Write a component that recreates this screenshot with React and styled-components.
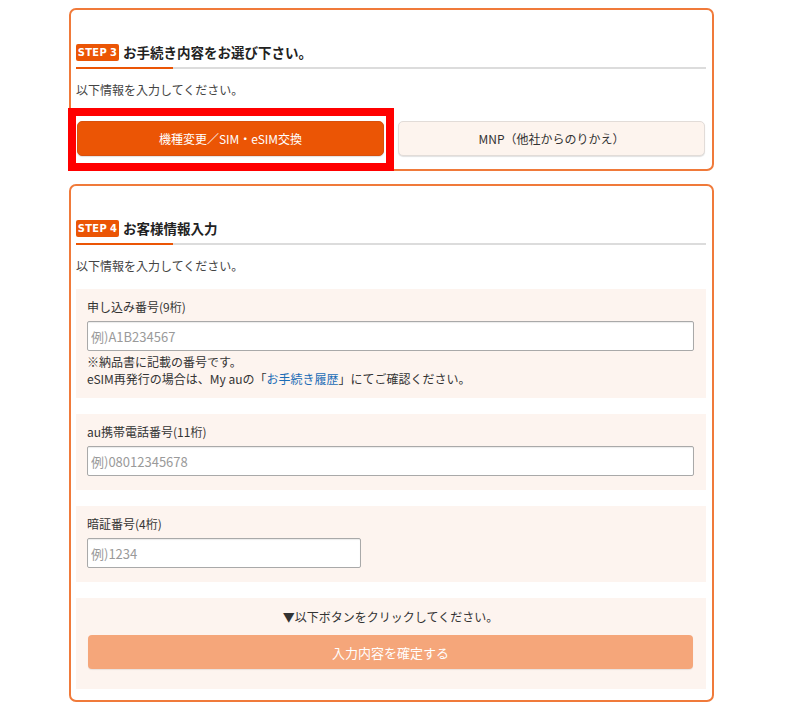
import React from "react";
import styled, { createGlobalStyle } from "styled-components";

const GlobalStyle = createGlobalStyle`
  html, body { margin: 0; padding: 0; background: #fff; }
  body {
    font-family: "Noto Sans CJK JP", "Noto Sans", sans-serif;
    color: #333;
    -webkit-font-smoothing: antialiased;
  }
  * { box-sizing: border-box; }
`;

const Page = styled.div`
  padding: 8px 0 20px 69px;
  width: 714px;
  display: flex;
  flex-direction: column;
  gap: 13px;
`;

const Card = styled.section`
  border: 2px solid #f07a3a;
  border-radius: 7px;
  padding: 33px 6px ${(p) => p.$bottom}px 5px;
  background: #fff;
`;

const Heading = styled.div`
  position: relative;
  display: flex;
  align-items: center;
  gap: 4px;
  padding-bottom: 6px;
  border-bottom: 2px solid #dcdcdc;
  &::after {
    content: "";
    position: absolute;
    left: 0;
    bottom: -2px;
    width: 97px;
    height: 2px;
    background: #eb5505;
  }
`;

const Badge = styled.span`
  display: inline-flex;
  align-items: center;
  justify-content: center;
  width: 43px;
  height: 17px;
  background: #eb5505;
  color: #fff;
  border-radius: 2px;
  font-family: "Liberation Sans Narrow", "DejaVu Sans Condensed", "Roboto", sans-serif;
  font-weight: 700;
  font-size: 11px;
  letter-spacing: 0.3px;
  line-height: 1;
  gap: 3px;
`;

const Title = styled.h2`
  margin: 0;
  font-size: 13.5px;
  font-weight: 700;
  color: #222;
  line-height: 18px;
`;

const Lead = styled.p`
  margin: ${(p) => p.$top}px 0 ${(p) => p.$bottom}px;
  font-size: 12px;
  line-height: 18px;
  color: #444;
`;

const ChoiceRow = styled.div`
  display: grid;
  grid-template-columns: 1fr 1fr;
  gap: 14px;
  padding: 0 1px 0 1px;
`;

const ChoiceWrap = styled.div`
  position: relative;
`;

const Highlight = styled.span`
  position: absolute;
  top: -13px;
  left: -9px;
  right: -10px;
  bottom: -15px;
  border: 8px solid #ff0000;
  pointer-events: none;
`;

const Choice = styled.button`
  width: 100%;
  height: 35px;
  border-radius: 5px;
  font-family: inherit;
  font-size: 12px;
  cursor: pointer;
  border: 1px solid ${(p) => (p.$active ? "#d9500c" : "#e2dcd8")};
  background: ${(p) => (p.$active ? "#eb5505" : "#fdf4ee")};
  color: ${(p) => (p.$active ? "#fff" : "#333")};
  box-shadow: 0 1px 1px rgba(0, 0, 0, 0.12);
`;

const Fields = styled.div`
  display: flex;
  flex-direction: column;
  gap: 16px;
`;

const Field = styled.div`
  background: #fdf4ef;
  padding: 9px 12px ${(p) => p.$bottom ?? 14}px 11px;
`;

const Label = styled.label`
  display: block;
  font-size: 12px;
  line-height: 18px;
  color: #333;
  margin-bottom: 5px;
`;

const Input = styled.input`
  display: block;
  width: ${(p) => p.$width || "100%"};
  height: 30px;
  border: 1px solid #a9a9a9;
  border-radius: 2px;
  background: #fff;
  padding: 0 3px;
  font-family: inherit;
  font-size: 13px;
  color: #333;
  box-shadow: inset 0 1px 1px rgba(0, 0, 0, 0.08);
  &::placeholder { color: #9a9a9a; }
`;

const Note = styled.p`
  margin: 2px 0 0;
  font-size: 12px;
  line-height: 17px;
  color: #333;
`;

const Link = styled.a`
  color: #1a6cb6;
  text-decoration: none;
`;

const SubmitArea = styled.div`
  background: #fdf4ef;
  padding: 9px 13px 20px 12px;
  display: flex;
  flex-direction: column;
  align-items: center;
`;

const SubmitHint = styled.p`
  margin: 0 0 8px;
  font-size: 12px;
  line-height: 20px;
  color: #333;
`;

const Submit = styled.button`
  width: 100%;
  height: 34px;
  border: none;
  border-radius: 4px;
  background: #f5a67a;
  color: #fff;
  font-family: inherit;
  font-size: 13px;
  box-shadow: 0 1px 1px rgba(0, 0, 0, 0.08);
`;

export default function App() {
  return (
    <>
      <GlobalStyle />
      <Page>
        <Card $bottom={13}>
          <Heading>
            <Badge>
              <span>STEP</span>
              <span>3</span>
            </Badge>
            <Title>お手続き内容をお選び下さい。</Title>
          </Heading>
          <Lead $top={12} $bottom={22}>以下情報を入力してください。</Lead>
          <ChoiceRow>
            <ChoiceWrap>
              <Choice $active>機種変更／SIM・eSIM交換</Choice>
              <Highlight />
            </ChoiceWrap>
            <ChoiceWrap>
              <Choice>MNP（他社からのりかえ）</Choice>
            </ChoiceWrap>
          </ChoiceRow>
        </Card>

        <Card $bottom={11}>
          <Heading>
            <Badge>
              <span>STEP</span>
              <span>4</span>
            </Badge>
            <Title>お客様情報入力</Title>
          </Heading>
          <Lead $top={12} $bottom={14}>以下情報を入力してください。</Lead>
          <Fields>
            <Field $bottom={11}>
              <Label>申し込み番号(9桁)</Label>
              <Input placeholder="例)A1B234567" />
              <Note>
                ※納品書に記載の番号です。
                <br />
                eSIM再発行の場合は、My auの「<Link href="#">お手続き履歴</Link>」にてご確認ください。
              </Note>
            </Field>
            <Field>
              <Label>au携帯電話番号(11桁)</Label>
              <Input placeholder="例)08012345678" />
            </Field>
            <Field>
              <Label>暗証番号(4桁)</Label>
              <Input $width="274px" placeholder="例)1234" />
            </Field>
            <SubmitArea>
              <SubmitHint>▼以下ボタンをクリックしてください。</SubmitHint>
              <Submit>入力内容を確定する</Submit>
            </SubmitArea>
          </Fields>
        </Card>
      </Page>
    </>
  );
}
